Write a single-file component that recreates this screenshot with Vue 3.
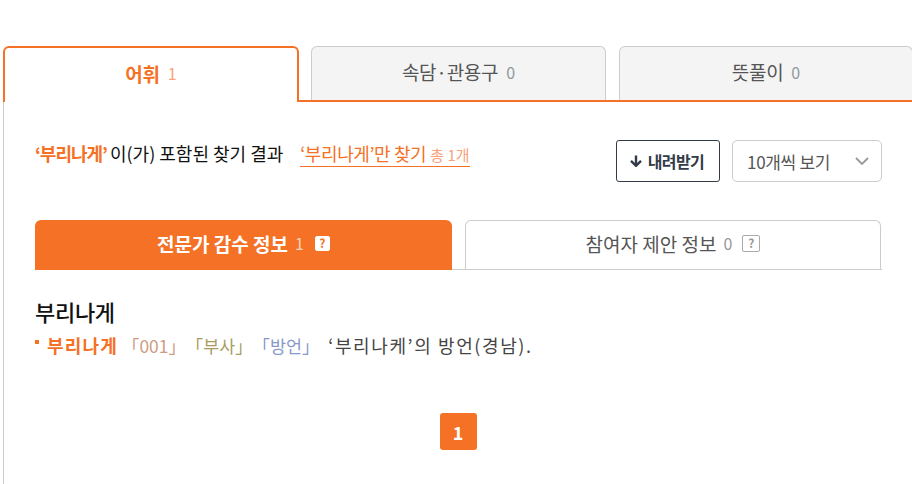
<script setup>
const tabs = [
  { name: "어휘", count: 1, active: true },
  { name: "속담·관용구", count: 0 },
  { name: "뜻풀이", count: 0 },
];
</script>

<template>
  <div class="page">
    <div class="tabs">
      <div v-for="tab in tabs" :key="tab.name" class="tab" :class="{ on: tab.active }">
        {{ tab.name }}<span class="count">{{ tab.count }}</span>
      </div>
    </div>
    <div class="body">
      <div class="result-row">
        <div class="summary">
          <b class="hl">‘부리나게’</b><span class="plain">이(가) 포함된 찾기 결과</span>
          <span class="only">‘부리나게’만 찾기<small>총 1개</small></span>
        </div>
        <div class="tools">
          <button class="down">
            <svg width="14" height="12" viewBox="0 0 14 12"><path d="M7 0.5v10M2 5.8l5 5 5-5" fill="none" stroke="#333b48" stroke-width="2.4"/></svg>
            내려받기
          </button>
          <div class="select">
            10개씩 보기
            <svg width="14" height="8" viewBox="0 0 14 8"><path d="M1 1l6 6 6-6" fill="none" stroke="#999" stroke-width="1.8"/></svg>
          </div>
        </div>
      </div>

      <div class="subtabs">
        <div class="subtab on">
          전문가 감수 정보<span class="count">1</span><i class="q">?</i>
        </div>
        <div class="subtab">
          참여자 제안 정보<span class="count">0</span><i class="q">?</i>
        </div>
      </div>

      <h2 class="word">부리나게</h2>
      <p class="def">
        <em class="dot"></em><b class="hl">부리나게</b>
        <span class="tag t1">「001」</span><span class="tag t2">「부사」</span><span class="tag t3">「방언」</span>
        <span class="mean">‘부리나케’의 방언(경남).</span>
      </p>

      <div class="pager"><span class="cur">1</span></div>
    </div>
  </div>
</template>

<style>
body {
  background: #fff;
  overflow: hidden;
}
</style>

<style scoped>
.page {
  width: 912px;
  height: 484px;
  box-sizing: border-box;
  padding: 46px 0 0 3px;
  overflow: hidden;
  font-family: "Noto Sans CJK KR", "Noto Sans", sans-serif;
  color: #333;
}
.tabs {
  display: flex;
  height: 56px;
  box-sizing: border-box;
  border-bottom: 2px solid #f47125;
  gap: 12px;
}
.tab {
  flex: 0 0 296px;
  height: 54px;
  box-sizing: border-box;
  display: flex;
  align-items: center;
  justify-content: center;
  background: #f4f4f4;
  border: 1px solid #ccc;
  border-bottom: none;
  border-radius: 6px 6px 0 0;
  font-size: 19px;
  letter-spacing: -0.3px;
  color: #555;
  padding-bottom: 4px;
}
.tab:nth-child(2) {
  flex-basis: 295px;
  margin-right: 1px;
}
.tab:nth-child(3) {
  flex-basis: 294px;
}
.tab.on {
  height: 56px;
  background: #fff;
  border: 2px solid #f47125;
  border-bottom: none;
  color: #f47125;
  font-weight: 700;
  position: relative;
  z-index: 1;
}
.count {
  margin-left: 8px;
  font-size: 16px;
  font-weight: 400;
  color: #8e9a9c;
  letter-spacing: 0;
}
.on .count {
  color: #f9a27c;
}
.body {
  height: 382px;
  box-sizing: border-box;
  border-left: 1px solid #ccc;
  padding: 38px 30px 0 31px;
}
.result-row {
  display: flex;
  justify-content: space-between;
  align-items: flex-start;
  height: 42px;
}
.summary {
  font-size: 18px;
  line-height: 26px;
  color: #111;
}
.summary .hl {
  letter-spacing: -1px;
}
.plain {
  margin-left: 3px;
  letter-spacing: 0;
}
.hl {
  color: #f47125;
  font-weight: 700;
}
.only {
  display: inline-block;
  margin-left: 17px;
  color: #f47125;
  border-bottom: 1px solid #f47125;
  line-height: 25px;
  height: 25px;
  letter-spacing: -0.4px;
}
.only small {
  margin-left: 4px;
  font-size: 15px;
  letter-spacing: 0;
  color: #f9a27c;
}
.tools {
  display: flex;
  gap: 12px;
}
.down {
  width: 104px;
  height: 42px;
  display: flex;
  align-items: center;
  justify-content: center;
  gap: 5px;
  background: #fff;
  border: 1px solid #333b48;
  border-radius: 3px;
  font-family: inherit;
  font-size: 16px;
  font-weight: 700;
  letter-spacing: -0.6px;
  color: #333b48;
  padding: 0 3px 0 0;
}
.select {
  width: 150px;
  height: 42px;
  box-sizing: border-box;
  display: flex;
  align-items: center;
  justify-content: space-between;
  padding: 0 12px 0 14px;
  border: 1px solid #ccc;
  border-radius: 5px;
  font-size: 17px;
  letter-spacing: -0.3px;
  color: #555;
}
.subtabs {
  display: flex;
  margin-top: 38px;
  height: 50px;
  box-sizing: border-box;
  border-bottom: 1px solid #ccc;
  gap: 13px;
}
.subtab {
  flex: 0 0 417px;
  height: 49px;
  box-sizing: border-box;
  display: flex;
  align-items: center;
  justify-content: center;
  border: 1px solid #ccc;
  border-bottom: none;
  border-radius: 6px 6px 0 0;
  font-size: 19px;
  color: #555;
  padding-bottom: 4px;
}
.subtab:last-child {
  flex-basis: 416px;
}
.subtab.on {
  height: 50px;
  background: #f47125;
  border: none;
  color: #fff;
  font-weight: 700;
}
.subtab .count {
  font-size: 16px;
  color: #999;
  margin-left: 7px;
}
.subtab.on .count {
  color: #fbd3bc;
}
.q {
  margin-left: 10px;
  width: 18px;
  height: 17px;
  box-sizing: border-box;
  display: flex;
  align-items: center;
  justify-content: center;
  border: 1.5px solid #aaa;
  border-radius: 2px;
  font-style: normal;
  font-size: 12px;
  font-weight: 700;
  line-height: 1;
  color: #999;
}
.on .q {
  margin-left: 11px;
  width: 15px;
  height: 15px;
  background: #fff;
  border-color: #fff;
  color: #f47125;
}
.word {
  margin: 27px 0 0;
  font-size: 22px;
  font-weight: 500;
  line-height: 29px;
  letter-spacing: -0.3px;
  color: #111;
}
.def {
  margin: 6px 0 0;
  font-size: 18px;
  line-height: 27px;
  letter-spacing: 1.2px;
  color: #444;
  display: flex;
  align-items: center;
}
.dot {
  width: 4px;
  height: 4px;
  background: #f47125;
  margin: 0 8px 8px 0;
}
.def .hl {
  margin-right: 4px;
}
.tag {
  font-size: 17.4px;
  letter-spacing: 0;
}
.t1 {
  color: #cf9b82;
}
.t2 {
  color: #a89c63;
}
.t3 {
  color: #8798cb;
}
.mean {
  margin-left: 9px;
  white-space: pre;
  letter-spacing: 1.6px;
}
.pager {
  display: flex;
  justify-content: center;
  margin-top: 54px;
  padding-right: 1px;
}
.cur {
  width: 37px;
  height: 37px;
  display: flex;
  align-items: center;
  justify-content: center;
  background: #f47125;
  border-radius: 3px;
  color: #fff;
  font-size: 18px;
  font-weight: 700;
}
</style>
